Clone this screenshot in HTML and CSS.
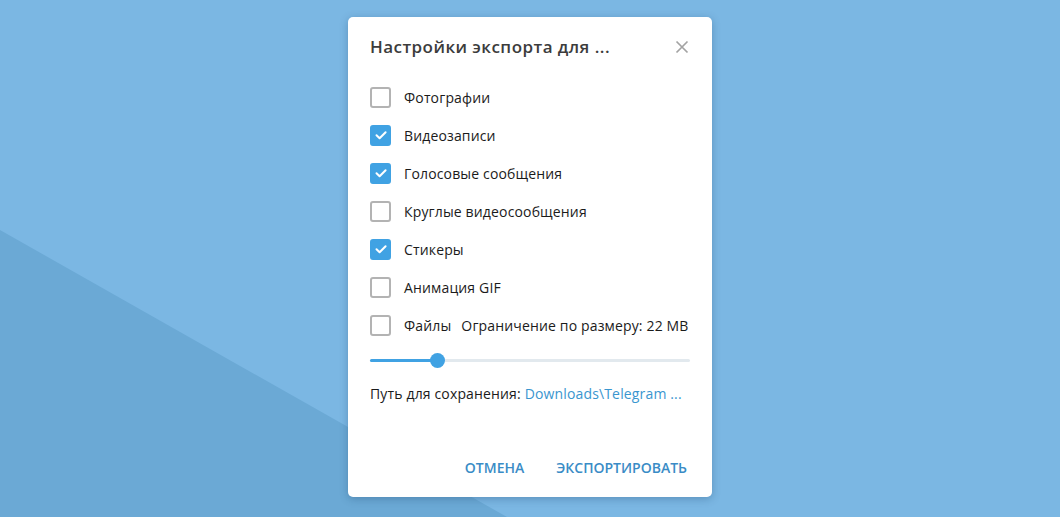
FILE: index.html
```html
<!DOCTYPE html>
<html lang="ru">
<head>
<meta charset="utf-8">
<title>Настройки экспорта</title>
<link rel="stylesheet" href="styles.css">
</head>
<body>
<div class="backdrop"></div>
<div class="dialog">
  <div class="header">
    <div class="title">Настройки экспорта для ...</div>
    <svg class="close" width="14" height="14" viewBox="0 0 14 14"><path d="M1.5 1.5 L12.5 12.5 M12.5 1.5 L1.5 12.5" stroke="#a3a3a3" stroke-width="1.7" fill="none"/></svg>
  </div>
  <div class="options">
    <div class="row"><span class="box"></span><span class="label">Фотографии</span></div>
    <div class="row"><span class="box checked"><svg width="20" height="20" viewBox="0 0 20 20"><path d="M5.5 10.3 L8.6 13.3 L14.6 7.2" stroke="#fff" stroke-width="2" fill="none" stroke-linecap="round" stroke-linejoin="round"/></svg></span><span class="label">Видеозаписи</span></div>
    <div class="row"><span class="box checked"><svg width="20" height="20" viewBox="0 0 20 20"><path d="M5.5 10.3 L8.6 13.3 L14.6 7.2" stroke="#fff" stroke-width="2" fill="none" stroke-linecap="round" stroke-linejoin="round"/></svg></span><span class="label">Голосовые сообщения</span></div>
    <div class="row"><span class="box"></span><span class="label">Круглые видеосообщения</span></div>
    <div class="row"><span class="box checked"><svg width="20" height="20" viewBox="0 0 20 20"><path d="M5.5 10.3 L8.6 13.3 L14.6 7.2" stroke="#fff" stroke-width="2" fill="none" stroke-linecap="round" stroke-linejoin="round"/></svg></span><span class="label">Стикеры</span></div>
    <div class="row"><span class="box"></span><span class="label">Анимация GIF</span></div>
    <div class="row"><span class="box"></span><span class="label">Файлы</span><span class="limit">Ограничение по размеру: 22 MB</span></div>
  </div>
  <div class="slider">
    <div class="track"><div class="fill" style="width:68px"></div><div class="thumb"></div></div>
  </div>
  <div class="path">Путь для сохранения: <span class="link">Downloads\Telegram ...</span></div>
  <div class="buttons">
    <span class="btn">ОТМЕНА</span>
    <span class="btn">ЭКСПОРТИРОВАТЬ</span>
  </div>
</div>
</body>
</html>
```

FILE: styles.css
```css
html, body {
  margin: 0;
  padding: 0;
}
body {
  width: 1060px;
  height: 517px;
  background: #7bb7e3;
  font-family: "Open Sans", "Noto Sans", sans-serif;
  overflow: hidden;
  position: relative;
}
.backdrop {
  position: absolute;
  inset: 0;
  background: #6ba9d5;
  clip-path: polygon(0 230px, 507px 517px, 0 517px);
}
.dialog {
  position: relative;
  width: 364px;
  height: 480px;
  margin: 17px auto 0 348px;
  background: #fff;
  border-radius: 5px;
  box-shadow: 0 2px 8px rgba(20, 60, 100, 0.3);
  box-sizing: border-box;
  display: flex;
  flex-direction: column;
}
.header {
  display: flex;
  align-items: center;
  justify-content: space-between;
  padding: 20px 23px 0 22px;
  height: 20px;
}
.title {
  font-size: 17px;
  font-weight: 600;
  color: #3c3c3c;
  line-height: 20px;
  letter-spacing: 0.45px;
}
.close {
  display: block;
}
.options {
  margin-top: 21px;
  padding: 0 22px;
}
.row {
  height: 38px;
  display: flex;
  align-items: center;
}
.box {
  width: 21px;
  height: 21px;
  box-sizing: border-box;
  border: 2px solid #b3b3b3;
  border-radius: 3px;
  flex: none;
  position: relative;
}
.box.checked {
  background: #40a2e3;
  border-color: #40a2e3;
}
.box.checked svg {
  position: absolute;
  left: -1.5px;
  top: -1.5px;
}
.label {
  margin-left: 13px;
  font-size: 14px;
  color: #1b1b1b;
  letter-spacing: 0.15px;
}
.limit {
  margin-left: 10px;
  font-size: 14px;
  color: #1b1b1b;
  letter-spacing: 0.15px;
}
.slider {
  height: 30px;
  padding: 1px 22px 0;
  display: flex;
  align-items: center;
}
.track {
  position: relative;
  width: 100%;
  height: 3px;
  background: #e2e9ee;
  border-radius: 2px;
}
.fill {
  height: 3px;
  background: #40a2e3;
  border-radius: 2px;
}
.thumb {
  position: absolute;
  left: 60px;
  top: -6px;
  width: 15px;
  height: 15px;
  border-radius: 50%;
  background: #40a2e3;
}
.path {
  margin-top: 9px;
  padding: 0 22px;
  font-size: 14px;
  line-height: 20px;
  color: #1b1b1b;
  letter-spacing: 0.15px;
}
.link {
  color: #3a96cf;
}
.buttons {
  margin-top: auto;
  display: flex;
  justify-content: flex-end;
  gap: 8px;
  padding: 0 13px 11px 0;
}
.btn {
  height: 36px;
  line-height: 36px;
  padding: 0 12px;
  font-size: 14px;
  font-weight: 600;
  color: #3a8cc6;
}
```
